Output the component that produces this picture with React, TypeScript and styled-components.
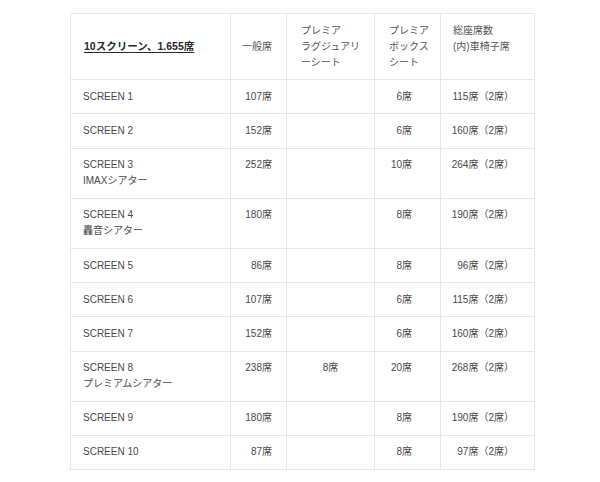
import styled, {createGlobalStyle} from "styled-components";

const GlobalStyle = createGlobalStyle`
  html, body {
    margin: 0;
    padding: 0;
    background: #ffffff;
  }
  body {
    font-family: "Liberation Sans", "Noto Sans CJK JP", sans-serif;
    color: #4a4a4a;
  }
`

const Page = styled.div`
  padding: 13px 0 0 70px;
`

const SeatTable = styled.table`
  width: 464px;
  table-layout: fixed;
  border-collapse: collapse;
  font-size: 10px;
  line-height: 16px;
  background: #ffffff;
`

type Align = "left" | "right" | "center";

const HeadCell = styled.th<{ $align?: Align; $padL?: number; $padR?: number }>`
  border: 1px solid #e7e7e7;
  font-weight: normal;
  vertical-align: middle;
  white-space: nowrap;
  text-align: ${p => p.$align || "left"};
  padding: 8.6px ${p => p.$padR ?? 0}px 8.6px ${p => p.$padL ?? 13}px;
  color: #555555;
`

const Title = styled.span`
  font-weight: bold;
  color: #2a2a2a;
  text-decoration: underline;
  text-underline-offset: 2px;
  font-size: 10.5px;
`

const Cell = styled.td<{ $align?: Align; $padL?: number; $padR?: number }>`
  border: 1px solid #e7e7e7;
  vertical-align: top;
  white-space: nowrap;
  text-align: ${p => p.$align || "left"};
  padding: 8.6px ${p => p.$padR ?? 0}px 8.6px ${p => p.$padL ?? 12}px;
`

interface Screen {
  name: string
  sub?: string
  general: string
  luxury?: string
  box: string
  total: string
}

const screens: Screen[] = [
  {name: "SCREEN 1", general: "107席", box: "6席", total: "115席（2席）"},
  {name: "SCREEN 2", general: "152席", box: "6席", total: "160席（2席）"},
  {name: "SCREEN 3", sub: "IMAXシアター", general: "252席", box: "10席", total: "264席（2席）"},
  {name: "SCREEN 4", sub: "轟音シアター", general: "180席", box: "8席", total: "190席（2席）"},
  {name: "SCREEN 5", general: "86席", box: "8席", total: "96席（2席）"},
  {name: "SCREEN 6", general: "107席", box: "6席", total: "115席（2席）"},
  {name: "SCREEN 7", general: "152席", box: "6席", total: "160席（2席）"},
  {name: "SCREEN 8", sub: "プレミアムシアター", general: "238席", luxury: "8席", box: "20席", total: "268席（2席）"},
  {name: "SCREEN 9", general: "180席", box: "8席", total: "190席（2席）"},
  {name: "SCREEN 10", general: "87席", box: "8席", total: "97席（2席）"},
]

export default function App() {
  return (
    <Page>
      <GlobalStyle/>
      <SeatTable>
        <colgroup>
          <col style={{width: 160}}/>
          <col style={{width: 56}}/>
          <col style={{width: 88}}/>
          <col style={{width: 66}}/>
          <col style={{width: 94}}/>
        </colgroup>
        <thead>
          <tr>
            <HeadCell><Title>10スクリーン、1.655席</Title></HeadCell>
            <HeadCell $align="right" $padL={0} $padR={14}>一般席</HeadCell>
            <HeadCell $padL={14}>プレミア<br/>ラグジュアリ<br/>ーシート</HeadCell>
            <HeadCell $padL={14}>プレミア<br/>ボックス<br/>シート</HeadCell>
            <HeadCell $padL={12}>総座席数<br/>(内)車椅子席<br/>&nbsp;</HeadCell>
          </tr>
        </thead>
        <tbody>
          {screens.map(s => (
            <tr key={s.name}>
              <Cell>{s.name}{s.sub ? <><br/>{s.sub}</> : null}</Cell>
              <Cell $align="right" $padL={0} $padR={14}>{s.general}</Cell>
              <Cell $align="center" $padL={0}>{s.luxury || ""}</Cell>
              <Cell $align="right" $padL={0} $padR={28}>{s.box}</Cell>
              <Cell $align="right" $padL={0} $padR={20}>{s.total}</Cell>
            </tr>
          ))}
        </tbody>
      </SeatTable>
    </Page>
  )
}
